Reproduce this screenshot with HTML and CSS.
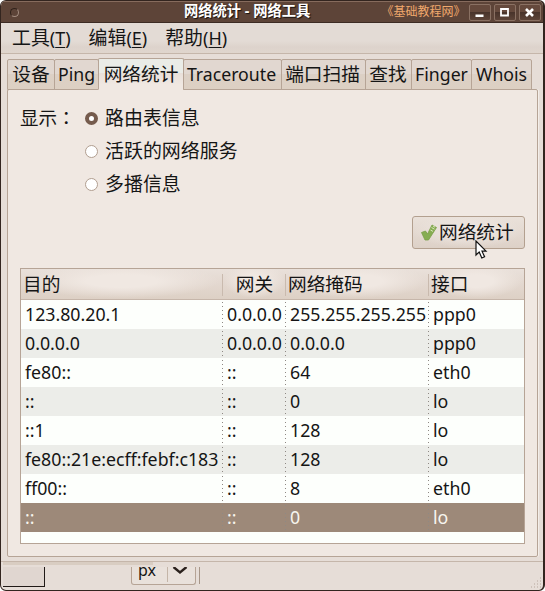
FILE: index.html
```html
<!DOCTYPE html>
<html lang="zh-CN">
<head>
<meta charset="utf-8">
<title>网络统计 - 网络工具</title>
<link rel="stylesheet" href="styles.css">
</head>
<body>
<div class="window">
  <header class="titlebar">
    <span class="orb"></span>
    <h1 class="title">网络统计 - 网络工具</h1>
    <span class="credit">《基础教程网》</span>
    <div class="controls">
      <span class="control"><svg width="21" height="17" viewBox="0 0 21 17"><path d="M6.500 10.500h8v2.500h-8z" fill="#fff"/></svg></span>
      <span class="control"><svg width="21" height="17" viewBox="0 0 21 17"><path d="M7 5h7v6.500H7z" fill="none" stroke="#fff" stroke-width="1.800"/></svg></span>
      <span class="control"><svg width="21" height="17" viewBox="0 0 21 17"><path d="M7 5l7 7M14 5l-7 7" stroke="#fff" stroke-width="2.600"/></svg></span>
    </div>
  </header>
  <nav class="menubar">
    <span class="menu">工具<i>(<u>T</u>)</i></span>
    <span class="menu">编辑<i>(<u>E</u>)</i></span>
    <span class="menu">帮助<i>(<u>H</u>)</i></span>
  </nav>
  <div class="tabs">
    <span class="tab tab-device">设备</span>
    <span class="tab latin tab-ping">Ping</span>
    <span class="tab active">网络统计</span>
    <span class="tab latin tab-trace">Traceroute</span>
    <span class="tab tab-scan">端口扫描</span>
    <span class="tab tab-find">查找</span>
    <span class="tab latin tab-finger">Finger</span>
    <span class="tab latin tab-whois">Whois</span>
  </div>
  <main class="panel">
    <div class="options">
      <span class="label" lang="zh-TW">显示：</span>
      <div class="radios">
        <span class="option"><b class="radio checked"></b><span>路由表信息</span></span>
        <span class="option"><b class="radio"></b><span>活跃的网络服务</span></span>
        <span class="option"><b class="radio"></b><span>多播信息</span></span>
      </div>
    </div>
    <div class="actions">
      <div class="button">
        <svg class="check" width="18" height="19" viewBox="0 0 18 19"><path d="M1.500 9.500l4-1.500 2 3 4.500-9 4.500 2.500L8.500 17H5z" fill="#86ad52" stroke="#7a9e48" stroke-width=".8" stroke-linejoin="round"/><path d="M11.500 4.500l3 1.700M10.500 7l2.500 1.400M13 3l2 1.200" stroke="#dce8bd" stroke-width="1"/></svg>
        <span>网络统计</span>
        <svg class="pointer" width="13" height="20" viewBox="0 0 13 20"><path d="M1 1v14l3.200-3 2.600 6 2.800-1.200-2.600-5.600H11z" fill="#fff" stroke="#111" stroke-width="1.200"/></svg>
      </div>
    </div>
    <div class="table">
      <div class="head"><span>目的</span><span class="center">网关</span><span>网络掩码</span><span>接口</span></div>
      <div class="row"><span>123.80.20.1</span><span>0.0.0.0</span><span>255.255.255.255</span><span>ppp0</span></div>
      <div class="row"><span>0.0.0.0</span><span>0.0.0.0</span><span>0.0.0.0</span><span>ppp0</span></div>
      <div class="row"><span>fe80::</span><span>::</span><span>64</span><span>eth0</span></div>
      <div class="row"><span>::</span><span>::</span><span>0</span><span>lo</span></div>
      <div class="row"><span>::1</span><span>::</span><span>128</span><span>lo</span></div>
      <div class="row"><span>fe80::21e:ecff:febf:c183</span><span>::</span><span>128</span><span>lo</span></div>
      <div class="row"><span>ff00::</span><span>::</span><span>8</span><span>eth0</span></div>
      <div class="row selected"><span>::</span><span>::</span><span>0</span><span>lo</span></div>
    </div>
  </main>
  <footer class="status">
    <span class="box"></span>
    <span class="unit"><span>px</span><svg width="28" height="18" viewBox="0 0 28 18"><path d="M.5 0v15" stroke="#c4b5a8"/><path d="M6.500 0l6.500 5.500L19.500 0" fill="none" stroke="#2b211d" stroke-width="2.400"/></svg></span>
    <span class="divider"></span>
    <svg class="grip" width="12" height="12" viewBox="0 0 12 12"><path d="M10 1h1M7 4h1m2 0h1M4 7h1m2 0h1m2 0h1M1 10h1m2 0h1m2 0h1m2 0h1" stroke="#b5a89e" stroke-width="1.200"/></svg>
  </footer>
</div>
</body>
</html>
```
FILE: styles.css
```css
* { box-sizing: border-box; }
body {
  margin: 0;
  background: #fff;
  color: #151515;
  font-family: "Noto Sans", "Noto Sans CJK SC", sans-serif;
}
svg { display: block; flex: none; }
.window {
  display: flex;
  flex-direction: column;
  width: 545px;
  height: 591px;
  overflow: hidden;
  border: 1px solid #33251f;
  border-right-width: 2px;
  border-radius: 6px;
  background: #e6ddd7;
  font-size: 18.7px;
  white-space: nowrap;
}
.titlebar {
  display: flex;
  align-items: center;
  flex: none;
  height: 22px;
  padding: 0 2px 0 9px;
  border-top: 1px solid #866b5d;
  border-bottom: 1px solid #3c2b24;
  background: #5d4438;
}
.orb {
  width: 9px;
  height: 9px;
  border: 1px solid #30221b;
  border-bottom-color: #a38d80;
  border-right-color: #a38d80;
  border-radius: 50%;
}
.title {
  width: 130px;
  margin: -2px 0 0 165px;
  color: #fff;
  font-size: 14.3px;
  line-height: 18px;
  text-shadow: 1px 1px 1px #17100d;
}
.credit {
  width: 85px;
  margin-left: 68px;
  margin-right: 3px;
  color: #f0a86c;
  font-size: 12px;
  line-height: 20px;
}
.controls { display: flex; gap: 3px; margin-left: auto; }
.control {
  width: 22px;
  height: 17px;
  border: 1px solid #8a7163;
  border-radius: 2px;
  background: linear-gradient(#65493c 50%, #49342b 50%, #5d4438);
}
.control svg { margin: -1px; }
.menubar {
  display: flex;
  flex: none;
  gap: 18px;
  height: 31px;
  padding-left: 11px;
  border-bottom: 1px solid #c5b6aa;
  background: linear-gradient(#e3dbd5 60%, #ddd3cc 80%, #e0d6cd);
  line-height: 30px;
}
.menu { font-size: 18.9px; }
.menu i { font-size: 18px; font-style: normal; }
.menu u { text-underline-offset: 2px; text-decoration-thickness: 1px; }
.tabs {
  display: flex;
  align-items: flex-end;
  flex: none;
  height: 36px;
  padding: 0 0 0 6px;
  position: relative;
  z-index: 1;
}
.tab {
  height: 31px;
  margin-right: -1px;
  border: 1px solid #b6a496;
  border-radius: 2px 2px 0 0;
  background: linear-gradient(#e1d7d0 50%, #dcd0c5 50%, #ddd0c3);
  line-height: 28px;
  text-align: center;
}
.tab.active {
  width: 86px;
  height: 32px;
  border-bottom-color: #f0e8e2;
  background: linear-gradient(#eaece7 48%, #e9e0da 48%, #f0e8e2 85%);
  line-height: 29px;
}
.latin { font-size: 17.7px; }
.tab-device { width: 48px; }
.tab-ping { width: 45px; }
.tab-trace { width: 99px; padding-right: 2px; }
.tab-scan { width: 85px; padding-right: 2px; }
.tab-find { width: 47px; padding-right: 1px; }
.tab-finger { width: 61px; }
.tab-whois { width: 61px; }
.panel {
  flex: none;
  width: 531px;
  height: 468px;
  margin: -1px 0 0 6px;
  padding: 12px 12px 0;
  border: 1px solid #b6a496;
  border-radius: 2px;
  background: #f0e8e2;
  box-shadow: 1px 0 #f3eee9;
}
.options { display: flex; height: 114px; }
.label { width: 65px; font-family: "Noto Sans CJK TC", sans-serif; font-size: 18.5px; line-height: 30px; }
.option { display: flex; align-items: center; height: 33px; font-size: 18.95px; }
.option span { line-height: 29px; }
.radio {
  width: 13px;
  height: 13px;
  margin-right: 7px;
  border: 1px solid #b19e90;
  border-radius: 50%;
  background: #fff;
}
.radio.checked { border: 4px solid #755b4d; }
.actions { display: flex; justify-content: flex-end; height: 52px; }
.button {
  display: flex;
  position: relative;
  width: 113px;
  height: 33px;
  padding-left: 7px;
  border: 1px solid #b3a08f;
  border-radius: 3px;
  background: radial-gradient(ellipse at 50% 45%, #ede6e1 15%, transparent 70%), linear-gradient(#eae1da, #ddd1c7);
  line-height: 30px;
}
.check { margin: 6px 1px 0 0; }
.pointer { position: absolute; left: 62px; top: 23px; }
.table {
  width: 505px;
  height: 276px;
  border: 1px solid #b6a496;
  background: #fdfffc;
}
.head, .row { display: grid; grid-template-columns: 202px 63px 143px 95px; }
.head { height: 31px; border-bottom: 1px solid #c6b6aa; background: #dfd3c9; line-height: 30px; }
.head span {
  padding-left: 2px;
  background: linear-gradient(#c9baae, #c9baae) right 5px / 1px 22px no-repeat, radial-gradient(ellipse at 50% 40%, #f0e8e2 25%, transparent 68%), linear-gradient(#e9e0da, #ddd0c5);
}
.head span:last-child { background: radial-gradient(ellipse at 50% 40%, #f0e8e2 25%, transparent 68%), linear-gradient(#e9e0da, #ddd0c5); }
.head .center { padding: 0; text-align: center; }
.row { height: 29px; font-size: 17.75px; line-height: 29px; }
.row:nth-child(odd) { background: #ecede9; }
.row span {
  padding-left: 4px;
  background: repeating-linear-gradient(transparent 0 2px, #8f8984 2px 3px, transparent 3px 4px) right top / 1px 100% no-repeat;
}
.row span:last-child { background: none; }
.row.selected { background: #9d8979; color: #f7f5ee; }
.status {
  display: flex;
  flex: 1;
  position: relative;
  margin-top: 4px;
  padding: 5px 0 0 2px;
  border-top: 1px solid #c5b6aa;
  background: linear-gradient(#d9cdc2, #d9cdc2) 2px 0 / 150px 3px no-repeat;
}
.box { width: 42px; height: 20px; border-right: 1px solid #211a17; border-bottom: 1px solid #211a17; background: #e0d6d0; }
.unit {
  display: flex;
  justify-content: space-between;
  width: 65px;
  height: 18px;
  margin-left: 86px;
  padding-left: 6px;
  border: 1px solid #b6a496;
  border-top: 0;
  border-radius: 0 0 3px 3px;
  background: #e9e1db;
  font-size: 16px;
  line-height: 6px;
}
.divider { width: 1px; height: 17px; margin-left: 3px; background: #a79688; }
.grip { position: absolute; right: 1px; bottom: 1px; }
```
